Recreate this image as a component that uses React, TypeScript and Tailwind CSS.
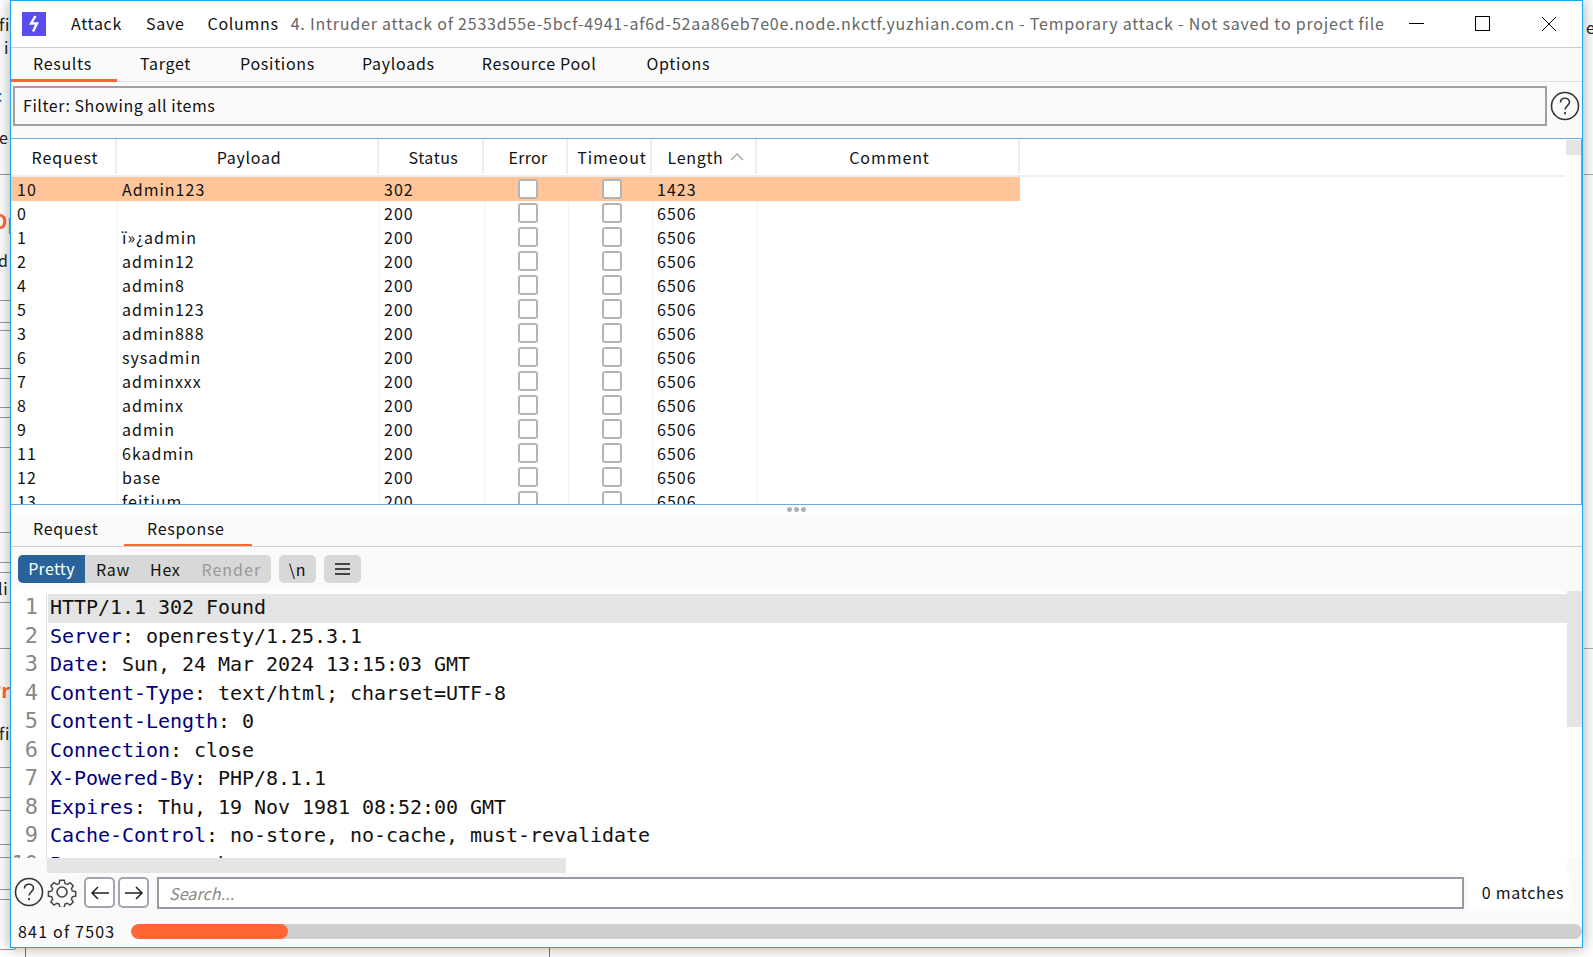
import React from "react";

const rows = [
  ["10", "Admin123", "302", "1423"],
  ["0", "", "200", "6506"],
  ["1", "ï»¿admin", "200", "6506"],
  ["2", "admin12", "200", "6506"],
  ["4", "admin8", "200", "6506"],
  ["5", "admin123", "200", "6506"],
  ["3", "admin888", "200", "6506"],
  ["6", "sysadmin", "200", "6506"],
  ["7", "adminxxx", "200", "6506"],
  ["8", "adminx", "200", "6506"],
  ["9", "admin", "200", "6506"],
  ["11", "6kadmin", "200", "6506"],
  ["12", "base", "200", "6506"],
  ["13", "feitium", "200", "6506"],
];

const headers = [
  ["Request", "w-[106px] pl-[4px] tracking-[0.9px]"],
  ["Payload", "w-[262px] pl-[4px] tracking-[0.7px]"],
  ["Status", "w-[105px] pl-[6px] tracking-[0.5px]"],
  ["Error", "w-[84px] pl-[6px] tracking-[0.3px]"],
  ["Timeout", "w-[84px] pl-[6px] tracking-[0.9px]"],
  ["Length", "w-[105px] pl-[4px] tracking-[0.7px]"],
  ["Comment", "w-[263px] pl-[4px] tracking-[0.9px]"],
];

const lines: [string, string][] = [
  ["", "HTTP/1.1 302 Found"],
  ["Server", " openresty/1.25.3.1"],
  ["Date", " Sun, 24 Mar 2024 13:15:03 GMT"],
  ["Content-Type", " text/html; charset=UTF-8"],
  ["Content-Length", " 0"],
  ["Connection", " close"],
  ["X-Powered-By", " PHP/8.1.1"],
  ["Expires", " Thu, 19 Nov 1981 08:52:00 GMT"],
  ["Cache-Control", " no-store, no-cache, must-revalidate"],
  ["Pragma", " no-cache"],
];

const strayLines = [174, 300, 322, 330, 368, 378, 407, 417, 447, 532, 562, 572, 602, 648, 767, 797, 810, 844, 857, 889, 899];

const HelpIcon = ({ size }: { size: number }) => (
  <svg width={size} height={size} viewBox="0 0 30 30" fill="none" stroke="#333" strokeWidth="1.6">
    <circle cx="15" cy="15" r="13.5" />
    <path d="M10.5 11.5c0-2.6 2-4.2 4.5-4.2s4.5 1.6 4.5 4c0 3.4-4.5 3.6-4.5 7.2" />
    <path d="M15 21v2.2" strokeWidth="1.8" />
  </svg>
);

const GearIcon = () => (
  <svg width="30" height="30" viewBox="0 0 30 30" fill="none" stroke="#444" strokeWidth="1.6">
    <circle cx="15" cy="15" r="5" />
    <path d="M12.6 2h4.8l.8 3.7 2.5 1 3.2-2 3.4 3.4-2 3.2 1 2.5 3.7.8v4.8l-3.7.8-1 2.5 2 3.2-3.4 3.4-3.2-2-2.5 1-.8 3.7h-4.8l-.8-3.7-2.5-1-3.2 2-3.4-3.4 2-3.2-1-2.5-3.7-.8v-4.8l3.7-.8 1-2.5-2-3.2 3.4-3.4 3.2 2 2.5-1z" transform="translate(1.4 1.4) scale(0.91)" />
  </svg>
);

export default function App() {
  return (
    <div className="relative h-[957px] w-[1593px] overflow-hidden bg-white font-['Noto_Sans_CJK_SC','Noto_Sans',sans-serif] text-[16px] tracking-[0.7px] text-[#111]">
      {/* bits of the window behind */}
      <span className="absolute left-[-1px] top-[12px] text-[#222]">fi</span>
      <span className="absolute left-[4px] top-[35px] text-[#222]">i</span>
      <span className="absolute left-[-2px] top-[83px] text-[#2a6399]">:</span>
      <span className="absolute left-[-1px] top-[125px] text-[#222]">e</span>
      <span className="absolute left-[-8px] top-[206px] text-[20px] font-bold tracking-normal text-[#ff6633]">Op</span>
      <span className="absolute left-[-2px] top-[248px] text-[#222]">d</span>
      <span className="absolute left-[-2px] top-[576px] text-[#222]">li</span>
      <span className="absolute left-[-12px] top-[675px] text-[20px] font-bold tracking-normal text-[#ff6633]">Pr</span>
      <span className="absolute left-[-1px] top-[721px] text-[#222]">fi</span>
      <span className="absolute left-[1586px] top-[15px] text-[#222]">e</span>
      {strayLines.map((y) => (
        <div key={y} className="absolute left-0 h-px w-[12px] bg-[#999]" style={{ top: y }} />
      ))}
      <div className="absolute left-[1584px] top-[174px] h-px w-[9px] bg-[#aaa]" />
      <div className="absolute left-[1584px] top-[648px] h-px w-[9px] bg-[#aaa]" />
      <div className="absolute left-[25px] top-[948px] h-[9px] w-px bg-[#777]" />
      <div className="absolute left-[549px] top-[948px] h-[9px] w-px bg-[#777]" />
      <div className="absolute left-0 top-[940px] h-[10px] w-[17px] rounded-br-[4px] border-b border-r border-[#999]" />

      {/* intruder window */}
      <div className="absolute left-[10px] top-0 flex h-[948px] w-[1573px] flex-col border border-[#1ba6f5] bg-[#fafafa] shadow-[0_0_14px_rgba(0,0,0,0.35)]">
        {/* title bar */}
        <div className="flex h-[46px] shrink-0 items-center bg-white">
          <div className="ml-[11px] flex h-6 w-6 items-center justify-center bg-[#5b4cf0]">
            <svg width="14" height="20" viewBox="0 0 14 20" fill="none" stroke="#fff" strokeWidth="2.4">
              <path d="M8.5 2 4 9.5h6L6 17.5" />
            </svg>
          </div>
          <span className="mb-[2px] ml-[25px]">Attack</span>
          <span className="mb-[2px] ml-[24px]">Save</span>
          <span className="mb-[2px] ml-[23px]">Columns</span>
          <span className="mb-[2px] ml-[12px] whitespace-nowrap tracking-[0.79px] text-[#666]">
            4. Intruder attack of 2533d55e-5bcf-4941-af6d-52aa86eb7e0e.node.nkctf.yuzhian.com.cn - Temporary attack - Not saved to project file
          </span>
          <div className="absolute left-[1398px] top-[15px] flex items-start">
            <div className="mt-[7px] h-px w-[15px] bg-black" />
            <div className="ml-[51px] h-[15px] w-[15px] border border-black" />
            <svg className="ml-[51px]" width="16" height="16" viewBox="0 0 16 16" stroke="#000" strokeWidth="1">
              <path d="M1 1l14 14M15 1 1 15" />
            </svg>
          </div>
        </div>

        {/* tabs */}
        <div className="flex h-[35px] shrink-0 border-y border-t-[#ccc] border-b-[#ddd] bg-[#fafafa]">
          <div className="flex h-[34px] w-[106px] items-center border-b-[3px] border-[#ff6633] pb-[1px] pl-[22px]">Results</div>
          <div className="ml-[23px] flex items-center pb-[3px]">Target</div>
          <div className="ml-[49px] flex items-center pb-[3px]">Positions</div>
          <div className="ml-[47px] flex items-center pb-[3px]">Payloads</div>
          <div className="ml-[47px] flex items-center pb-[3px]">Resource Pool</div>
          <div className="ml-[50px] flex items-center pb-[3px]">Options</div>
        </div>

        {/* filter */}
        <div className="flex h-[56px] shrink-0 items-start pl-[2px] pt-[4px]">
          <div className="flex h-[40px] w-[1534px] items-center border-2 border-[#a0a0a0] pb-[2px] pl-[8px] tracking-[0.55px]">Filter: Showing all items</div>
          <div className="ml-[3px] mt-[5px]">
            <HelpIcon size={30} />
          </div>
        </div>

        {/* results table */}
        <div className="relative h-[367px] shrink-0 overflow-hidden border-y border-r border-[#6fa8dc] bg-white tracking-[1px]">
          <div className="flex h-[38px] w-[1555px] border-b-2 border-[#eee]">
            {headers.map(([label, width]) => (
              <div key={label} className={`${width} flex h-[35px] items-center justify-center border-r-2 border-[#eee]`}>
                {label}
                {label === "Length" && (
                  <svg className="ml-[6px]" width="14" height="8" viewBox="0 0 14 8" fill="none" stroke="#aaa" strokeWidth="1.5">
                    <path d="M1 7l6-6 6 6" />
                  </svg>
                )}
              </div>
            ))}
            <div className="absolute right-0 top-[1px] h-[15px] w-[15px] bg-[#e4e4e4]" />
          </div>
          {rows.map((row, i) => (
            <div key={row[0]} className={`flex h-[24px] w-[1009px] items-center ${i === 0 ? "bg-[#ffc599]" : ""}`}>
              <div className="w-[106px] pl-[6px]">{row[0]}</div>
              <div className={`h-full w-[262px] border-l pl-[4px] leading-[24px] ${i === 0 ? "border-transparent" : "border-[#f2f2f2]"}`}>{row[1]}</div>
              <div className={`h-full w-[105px] border-l pl-[4px] leading-[24px] ${i === 0 ? "border-transparent" : "border-[#f2f2f2]"}`}>{row[2]}</div>
              <div className={`flex h-full w-[84px] items-center border-l pl-[33px] ${i === 0 ? "border-transparent" : "border-[#f2f2f2]"}`}>
                <div className="h-[20px] w-[20px] rounded-[3px] border-2 border-[#b4b4b4] bg-white" />
              </div>
              <div className={`flex h-full w-[84px] items-center border-l pl-[33px] ${i === 0 ? "border-transparent" : "border-[#f2f2f2]"}`}>
                <div className="h-[20px] w-[20px] rounded-[3px] border-2 border-[#b4b4b4] bg-white" />
              </div>
              <div className={`h-full w-[105px] border-l pl-[4px] leading-[24px] ${i === 0 ? "border-transparent" : "border-[#f2f2f2]"}`}>{row[3]}</div>
              <div className={`h-full flex-1 border-l ${i === 0 ? "border-transparent" : "border-[#f2f2f2]"}`} />
            </div>
          ))}
        </div>

        {/* splitter */}
        <div className="flex h-[8px] shrink-0 items-center justify-center gap-[2px] bg-white">
          <div className="h-[5px] w-[5px] rounded-full bg-[#b0b0b0]" />
          <div className="h-[5px] w-[5px] rounded-full bg-[#b0b0b0]" />
          <div className="h-[5px] w-[5px] rounded-full bg-[#b0b0b0]" />
        </div>

        {/* request / response tabs */}
        <div className="flex h-[34px] shrink-0 border-b border-[#ccd0cc]">
          <div className="flex w-[113px] items-center pb-[4px] pl-[22px]">Request</div>
          <div className="flex h-[33px] w-[128px] items-center border-b-2 border-[#ff6633] pb-[2px] pl-[23px]">Response</div>
        </div>

        {/* message view toolbar */}
        <div className="flex h-[44px] shrink-0 items-start gap-[8px] pl-[7px] pt-[8px]">
          <div className="flex h-[28px] w-[253px] items-center overflow-hidden rounded-[5px] bg-[#d8d8d8] pb-[1px]">
            <div className="-mb-[1px] flex h-[28px] w-[67px] items-center justify-center bg-[#2a6399] pb-[2px] tracking-[0.3px] text-white">Pretty</div>
            <div className="ml-[11px]">Raw</div>
            <div className="ml-[20px]">Hex</div>
            <div className="ml-[21px] tracking-[1px] text-[#999]">Render</div>
          </div>
          <div className="flex h-[28px] w-[37px] items-center justify-center rounded-[5px] bg-[#d8d8d8] pb-[1px]">\n</div>
          <div className="flex h-[28px] w-[37px] flex-col items-center justify-center gap-[3px] rounded-[5px] bg-[#d8d8d8]">
            <div className="h-[2px] w-[15px] bg-[#444]" />
            <div className="h-[2px] w-[15px] bg-[#444]" />
            <div className="h-[2px] w-[15px] bg-[#444]" />
          </div>
        </div>

        {/* response body */}
        <div className="flex h-[267px] shrink-0 overflow-hidden bg-white tracking-[-0.04px]">
          <div className="h-full flex-1 overflow-hidden pt-[3px] font-['DejaVu_Sans_Mono',monospace] text-[20px]">
            {lines.map(([key, value], i) => (
              <div key={i} className="flex h-[28.5px] leading-[26px]">
                <div className="w-[27px] shrink-0 text-right text-[22px] text-[#888]">{i + 1}</div>
                <div className="ml-[8px] w-px shrink-0 bg-[#ddd]" />
                <div className={`ml-px flex-1 whitespace-pre pl-[2px] ${i === 0 ? "bg-[#e4e4e4]" : ""}`}>
                  {key && <span className="text-[#000080]">{key}</span>}
                  {key && ":"}
                  {value}
                </div>
              </div>
            ))}
          </div>
          <div className="h-[136px] w-[15px] shrink-0 bg-[#e4e4e4]" />
        </div>

        {/* horizontal scrollbar */}
        <div className="flex h-[15px] shrink-0 bg-white">
          <div className="w-[36px] bg-[#fafafa]" />
          <div className="w-[519px] bg-[#e4e4e4]" />
          <div className="flex-1" />
          <div className="w-[15px] bg-[#fafafa]" />
        </div>

        {/* search */}
        <div className="flex h-[39px] shrink-0 items-start pl-[3px]">
          <div className="mt-[4px]">
            <HelpIcon size={30} />
          </div>
          <div className="ml-[3px] mt-[4px]">
            <GearIcon />
          </div>
          <button className="ml-[7px] mt-[4px] flex h-[31px] w-[31px] items-center justify-center rounded-[5px] border-2 border-[#a5a3b0] bg-white">
            <svg width="20" height="16" viewBox="0 0 20 16" fill="none" stroke="#222" strokeWidth="1.5">
              <path d="M19 8H2M8 2 2 8l6 6" />
            </svg>
          </button>
          <button className="ml-[3px] mt-[4px] flex h-[31px] w-[31px] items-center justify-center rounded-[5px] border-2 border-[#a5a3b0] bg-white">
            <svg width="20" height="16" viewBox="0 0 20 16" fill="none" stroke="#222" strokeWidth="1.5">
              <path d="M1 8h17M12 2l6 6-6 6" />
            </svg>
          </button>
          <div className="ml-[8px] mt-[4px] flex h-[32px] w-[1307px] items-center border-2 border-[#9a98a8] bg-white pb-[1px] pl-[10px] italic tracking-[0.1px] text-[#888]">Search...</div>
          <div className="ml-[4px] flex h-[38px] w-[104px] items-center justify-center bg-white pl-[6px]">0 matches</div>
        </div>

        {/* progress */}
        <div className="flex flex-1 items-start pl-[7px] pt-[12px]">
          <div className="w-[113px] whitespace-nowrap leading-[15px] tracking-[1.2px]">841 of 7503</div>
          <div className="h-[15px] flex-1 overflow-hidden rounded-full bg-[#cfcfcf]">
            <div className="h-full w-[10.85%] rounded-full bg-[#ff6633]" />
          </div>
        </div>
      </div>
    </div>
  );
}
